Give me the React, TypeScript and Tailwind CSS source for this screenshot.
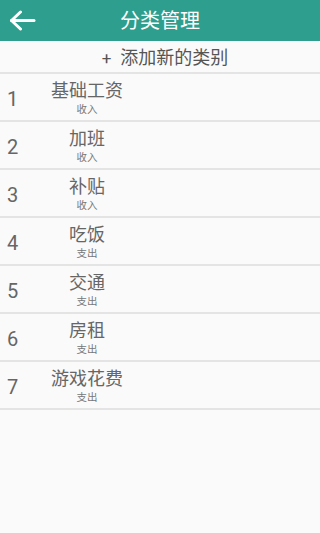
const categories = [
  { name: '基础工资', type: '收入' },
  { name: '加班', type: '收入' },
  { name: '补贴', type: '收入' },
  { name: '吃饭', type: '支出' },
  { name: '交通', type: '支出' },
  { name: '房租', type: '支出' },
  { name: '游戏花费', type: '支出' },
];

const font = { fontFamily: 'Roboto, "Noto Sans CJK SC", sans-serif' };

const App = () => {
  return (
    <div className="min-h-[533px] w-[320px] bg-[#fafafa]" style={font}>
      {/* Header */}
      <div className="relative flex h-[41px] items-center justify-center bg-[#2e9e8e]">
        <button className="absolute left-[9px] top-[10px]">
          <svg width="27" height="21" viewBox="0 0 27 21" fill="none" stroke="white" strokeWidth="3" strokeLinecap="round" strokeLinejoin="round">
            <path d="M25 10.5H2.5" />
            <path d="M11.5 2 2.5 10.5 11.5 19" />
          </svg>
        </button>
        <h1 className="text-[20px] leading-none text-white">分类管理</h1>
      </div>

      {/* Add new */}
      <div className="flex h-[33px] items-center justify-center gap-[9px] border-b-2 border-[#e4e4e4] pl-[10px] pt-[3px] text-[#555]">
        <span className="text-[17px] leading-none">+</span>
        <span className="text-[18px] leading-none">添加新的类别</span>
      </div>

      {/* List */}
      <ul>
        {categories.map((c, i) => (
          <li key={i} className="flex h-[48px] items-center border-b-2 border-[#e4e4e4]">
            <span className="w-[40px] pl-[7px] pt-[4px] text-[20px] text-[#666]">{i + 1}</span>
            <div className="flex w-[94px] flex-col items-center pt-[2px]">
              <span className="text-[18px] leading-[22px] text-[#666]">{c.name}</span>
              <span className="mt-[1px] text-[10.5px] leading-[14px] text-[#777]">{c.type}</span>
            </div>
          </li>
        ))}
      </ul>
    </div>
  );
};

export default App;
